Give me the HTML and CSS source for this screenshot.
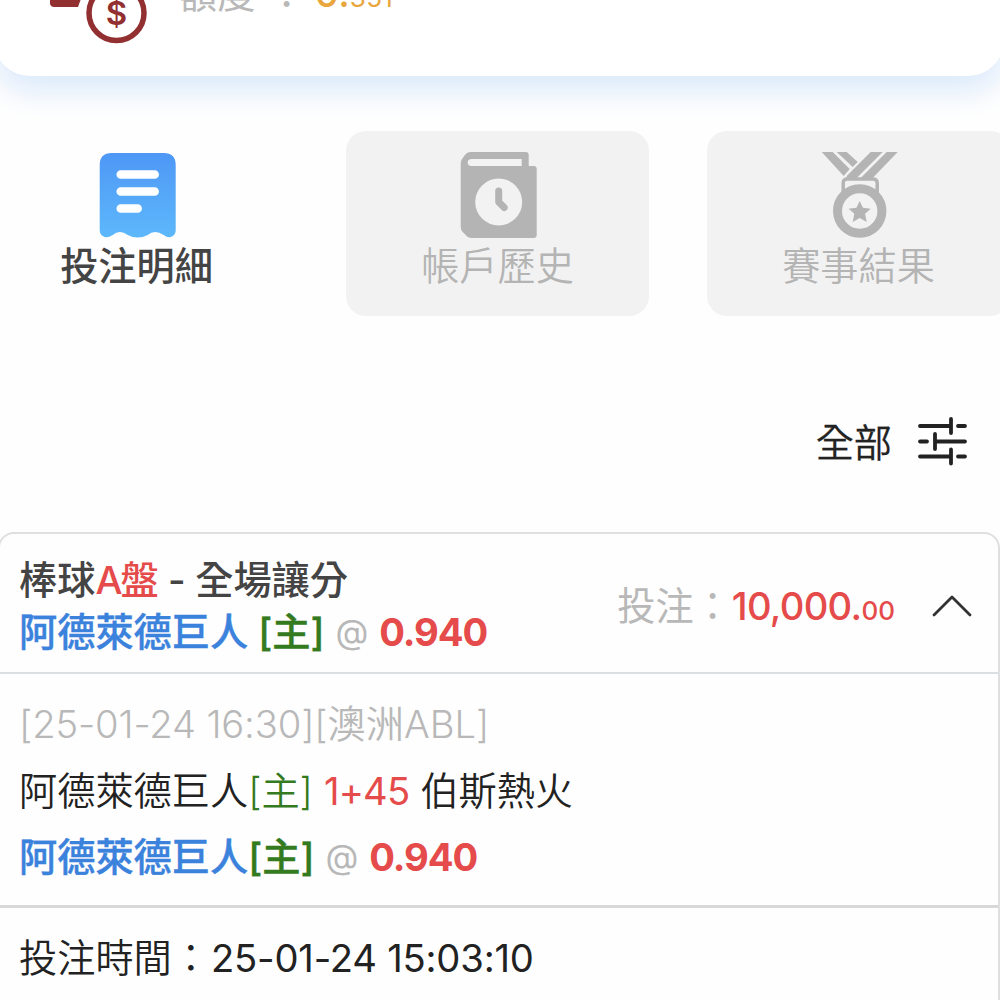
FILE: index.html
```html
<!DOCTYPE html>
<html lang="zh-Hant">
<head>
<meta charset="utf-8">
<title>投注明細</title>
<link rel="stylesheet" href="styles.css">
</head>
<body>
<main class="page">
  <section class="balance">
    <svg class="balance-icon" width="110" height="84" viewBox="0 0 110 84">
      <path d="M6 36h32l-4 11H10q-3 0-4-3z" fill="#922f30"/>
      <circle cx="72.500" cy="53" r="27.500" fill="#fff" stroke="#922f30" stroke-width="5.500"/>
      <text class="dollar" x="72.500" y="64.500" text-anchor="middle">$</text>
    </svg>
    <div class="balance-text"><span class="balance-label">額度</span><span class="balance-colon">：</span><span class="balance-value">0.<small>351</small></span></div>
  </section>

  <nav class="tabs">
    <a class="tab active">
      <svg class="tab-icon" width="78" height="88" viewBox="0 0 78 88">
        <defs><linearGradient id="receipt" x1="0" y1="0" x2="0" y2="1"><stop offset="0" stop-color="#4e97f6"/><stop offset="1" stop-color="#5db8fb"/></linearGradient></defs>
        <path d="M1 14Q1 2 13 2H65Q77 2 77 14V79Q77 83 74 85Q70 88 65 84Q56 78 49 84Q39 89 29 84Q21 78 14 84Q8 88 4 85Q1 83 1 79Z" fill="url(#receipt)"/>
        <path d="M22 23.500H56M22 40.500H56M22 57.500H39" stroke="#fff" stroke-width="8.500" stroke-linecap="round"/>
      </svg>
      <span class="tab-label">投注明細</span>
    </a>
    <a class="tab">
      <svg class="tab-icon" width="78" height="88" viewBox="0 0 78 88">
        <path d="M11 1H66Q69 1 69 4V15H74Q77 15 77 18V84Q77 87 74 87H11Q8 87 6 84L3 81Q1 79 1 76V12Q1 9 3 7L6 3Q8 1 11 1Z" fill="#b4b4b4"/>
        <path d="M12 8H62V15H12Q8 15 8 11.500Q8 8 12 8Z" fill="#f2f2f2"/>
        <circle cx="39" cy="51" r="23.500" fill="#f2f2f2"/>
        <path d="M39 40V51L44.500 56.500" fill="none" stroke="#b4b4b4" stroke-width="7" stroke-linecap="round" stroke-linejoin="round"/>
      </svg>
      <span class="tab-label">帳戶歷史</span>
    </a>
    <a class="tab">
      <svg class="tab-icon" width="78" height="88" viewBox="0 0 78 88">
        <g fill="#b4b4b4"><path d="M1 1H12L29 18L23 25Z"/><path d="M16 1H26L37 11L32 16Z"/><path d="M50 1H62L35 28H26V25Z"/><path d="M66 1H77L51 28H39Z"/></g>
        <path d="M22.500 44V32Q22.500 28 27 28H52Q56.500 28 56.500 32V44" fill="none" stroke="#b4b4b4" stroke-width="3.500"/>
        <circle cx="39" cy="60" r="22.200" fill="#f2f2f2" stroke="#b4b4b4" stroke-width="9"/>
        <path d="M39 50L42.300 56.800L50 57.700L44.400 62.800L46 71L39 67L32 71L33.600 62.800L28 57.700L35.700 56.800Z" fill="#b4b4b4"/>
      </svg>
      <span class="tab-label">賽事結果</span>
    </a>
  </nav>

  <div class="filter">
    <span class="filter-label">全部</span>
    <svg width="50" height="50" viewBox="0 0 50 50" fill="none" stroke="#222" stroke-width="3.800" stroke-linecap="round">
      <path d="M3 10H34M34 3V17M41 10H48M3 25.500H10M18 18V33M18 25.500H48M3 40.500H34M34 33.500V47.500M41 40.500H48"/>
    </svg>
  </div>

  <section class="bet">
    <header class="bet-head">
      <div class="bet-title">
        <div class="line market"><span>棒球</span><span class="red latin-a">A</span><span class="red">盤</span><span class="dash">-</span><span>全場讓分</span></div>
        <div class="line pick"><b class="blue">阿德萊德巨人</b><b class="green spaced">[主]</b><span class="at">@</span><b class="red odds">0.940</b></div>
      </div>
      <div class="stake"><span class="stake-label">投注：</span><span class="amount">10,000.<small>00</small></span></div>
      <svg class="chevron" width="40" height="24" viewBox="0 0 40 24" fill="none" stroke="#333" stroke-width="2.800" stroke-linecap="round" stroke-linejoin="round"><path d="M2 21L20 3L38 21"/></svg>
    </header>
    <div class="bet-body">
      <div class="line league"><span class="when">[25-01-24 16:30]</span><span class="comp">[澳洲ABL]</span></div>
      <div class="line match"><span>阿德萊德巨人</span><span class="green">[主]</span><span class="red handicap">1+45</span><span>伯斯熱火</span></div>
      <div class="line pick"><b class="blue">阿德萊德巨人</b><b class="green">[主]</b><span class="at">@</span><b class="red odds">0.940</b></div>
    </div>
    <footer class="bet-foot"><span class="time-label">投注時間：</span><span class="time">25-01-24 15:03:10</span></footer>
  </section>
</main>
</body>
</html>
```

FILE: styles.css
```css
* { box-sizing: border-box; }
body {
  margin: 0;
  background: #fefefe;
  color: #222;
  font-family: Inter, "Noto Sans CJK TC", sans-serif;
  font-size: 38.200px;
  line-height: 52px;
}
.page {
  width: 1000px;
  height: 1000px;
  overflow: hidden;
  display: flex;
  flex-direction: column;
}
.page > * { flex: none; }
small { font-size: 26px; }
b { font-weight: 500; -webkit-text-stroke: 0.400px currentColor; }
.red { color: #e54b4a; }
.green { color: #347a1e; }
.blue { color: #3b82dc; }

.balance {
  height: 76px;
  margin: 0 -4px 0 -6px;
  padding-left: 50px;
  display: flex;
  align-items: flex-end;
  background: #fff;
  border-radius: 0 0 36px 36px;
  box-shadow: 0 16px 30px #dceafb;
}
.balance-icon { margin-bottom: 32px; }
.dollar { font: 600 33px Inter, sans-serif; fill: #922f30; }
.balance-text {
  display: flex;
  margin: 0 0 51px 25px;
  color: #b8b8b8;
}
.balance-colon { margin-right: 9px; margin-left: 12px; }
.balance-value { position: relative; top: -1px; color: #e8a63c; font-weight: 500; }
.balance-value small { font-weight: 400; letter-spacing: 0.300px; }

.tabs {
  display: flex;
  gap: 58px;
  margin: 55px 0 0 -15px;
}
.tab {
  flex: 0 0 303px;
  height: 185px;
  padding-top: 20px;
  display: flex;
  flex-direction: column;
  align-items: center;
  border-radius: 20px;
  background: #f2f2f2;
  color: #b4b4b4;
  font-weight: 350;
}
.tab.active { background: transparent; color: #444; font-weight: 500; }
.tab-label { line-height: 55px; }
.tab-icon { transform: translateX(0.700px); }

.filter {
  display: flex;
  align-items: center;
  justify-content: flex-end;
  gap: 25px;
  margin-top: 97px;
  padding-right: 33px;
}
.filter-label { padding-top: 4px; font-weight: 350; -webkit-text-stroke: 0.300px currentColor; }

.bet {
  height: 500px;
  margin: 63px 0 0 -2px;
  border: 2px solid #dfdfdf;
  border-radius: 16px 16px 0 0;
}
.line { display: flex; height: 52px; white-space: pre; }
.bet-head {
  height: 140px;
  padding: 20px 26px 0 19px;
  display: flex;
  border-bottom: 2px solid #dcdfe1;
}
.bet-title { flex: 1; }
.market { color: #444; font-weight: 500; }
.latin-a { width: 25px; }
.dash { margin: 0 9.500px; }
.pick { font-weight: 500; }
.spaced { margin-left: 10px; }
.at { margin: 0 11px; color: #b8b8b8; font-weight: 400; font-size: 34px; }
.odds { font-weight: 700; -webkit-text-stroke: 0; letter-spacing: -1.100px; }
.stake { display: flex; padding-top: 26px; }
.stake-label { color: #b8b8b8; }
.amount { color: #e54b4a; font-weight: 500; letter-spacing: -0.700px; }
.amount small { font-weight: 450; letter-spacing: 0; }
.chevron { margin: 40px 0 0 37px; }
.bet-body {
  height: 234px;
  padding: 24px 19px 0;
  display: flex;
  flex-direction: column;
  gap: 14.500px;
  border-bottom: 3px solid #d8d8d8;
}
.league { color: #b8b8b8; font-weight: 350; }
.when { letter-spacing: -0.150px; }
.match { font-weight: 350; }
.handicap { margin: 0 11px; letter-spacing: -0.800px; font-weight: 400; }
.bet-foot { display: flex; padding: 24px 19px 0; font-weight: 350; }
.time { margin-left: 1px; font-weight: 400; letter-spacing: -0.200px; }
```
